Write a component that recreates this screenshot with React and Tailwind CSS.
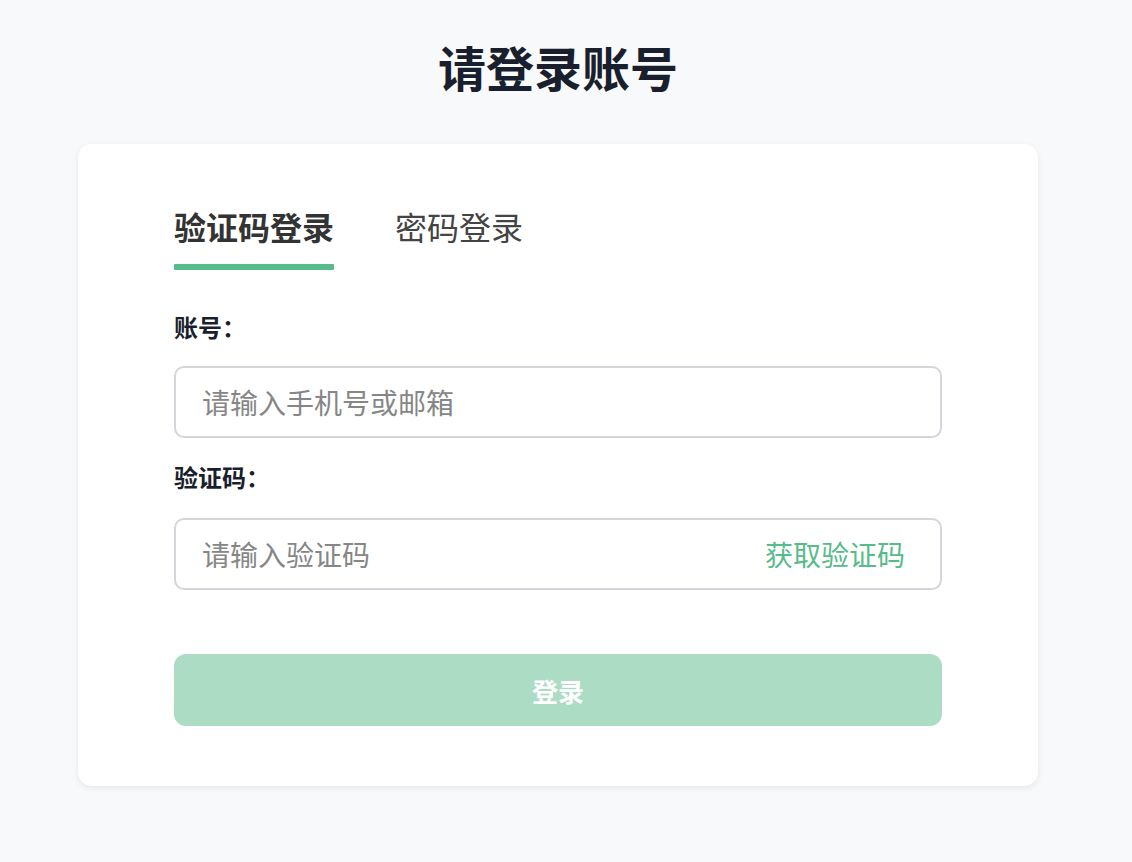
import React, { useState } from 'react';

export default function App() {
  const [tab, setTab] = useState('code');

  return (
    <div
      className="min-h-screen bg-[#f8f9fa] flex flex-col items-center pt-[37px] pb-[76px] pr-[16px]"
      style={{ fontFamily: '"Noto Sans CJK SC", "Noto Sans", sans-serif' }}
    >
      <h1 className="text-[48px] leading-[58px] font-bold text-[#1a1f2e]">请登录账号</h1>

      <div className="mt-[49px] w-[960px] bg-white rounded-[14px] shadow-[0_2px_6px_rgba(0,0,0,0.08)] px-[96px] pt-[60px] pb-[60px]">
        {/* tabs */}
        <div className="flex gap-[61px]">
          {[
            { id: 'code', label: '验证码登录' },
            { id: 'pwd', label: '密码登录' },
          ].map(t => (
            <button
              key={t.id}
              onClick={() => setTab(t.id)}
              className={`${
                tab === t.id ? 'font-bold text-[#333333]' : 'font-normal text-[#444444]'
              } flex flex-col items-stretch text-[32px] leading-[44px]`}
            >
              <span>{t.label}</span>
              <span
                className={`${
                  tab === t.id ? 'bg-[#57bb8a]' : 'bg-transparent'
                } mt-[16px] h-[6px] rounded-[1px]`}
              />
            </button>
          ))}
        </div>

        <label className="block mt-[41px] text-[24px] leading-[32px] font-semibold text-[#1a1f2e]">账号：</label>
        <div className="mt-[23px] h-[72px] border-2 border-[#d4d6db] rounded-[10px] flex items-center px-[26px]">
          <input
            className="flex-1 outline-none text-[28px] text-[#333] placeholder:text-[#868686] bg-transparent"
            placeholder="请输入手机号或邮箱"
          />
        </div>

        <label className="block mt-[23px] text-[24px] leading-[32px] font-semibold text-[#1a1f2e]">验证码：</label>
        <div className="mt-[25px] h-[72px] border-2 border-[#d4d6db] rounded-[10px] flex items-center pl-[26px] pr-[35px]">
          <input
            className="flex-1 outline-none text-[28px] text-[#333] placeholder:text-[#868686] bg-transparent"
            placeholder="请输入验证码"
          />
          <button className="text-[28px] text-[#57bb8a]">获取验证码</button>
        </div>

        <button className="mt-[64px] w-full h-[72px] rounded-[12px] bg-[#acdcc4] text-white text-[26px] font-bold">
          登录
        </button>
      </div>
    </div>
  );
}
